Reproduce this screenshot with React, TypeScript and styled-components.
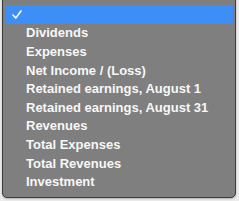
import React from "react";
import styled, { createGlobalStyle } from "styled-components";

const GlobalStyle = createGlobalStyle`
  html, body {
    margin: 0;
    padding: 0;
    background: #ececec;
  }
`;

const options = [
  "",
  "Dividends",
  "Expenses",
  "Net Income / (Loss)",
  "Retained earnings, August 1",
  "Retained earnings, August 31",
  "Revenues",
  "Total Expenses",
  "Total Revenues",
  "Investment",
];

const CheckIcon = () => (
  <svg width="10" height="9" viewBox="0 0 10 9">
    <path
      d="M1 5 L3.8 8 L9 1"
      fill="none"
      stroke="#ffffff"
      strokeWidth="1.6"
      strokeLinecap="round"
      strokeLinejoin="round"
    />
  </svg>
);

const App = () => {
  const [selected, setSelected] = React.useState(0);

  return (
    <>
      <GlobalStyle />
      <Page>
        <Menu>
          {options.map((label, i) => (
            <Item key={i} active={i === 0} onClick={() => setSelected(i)}>
              <Check>{i === selected && <CheckIcon />}</Check>
              <Label>{label}</Label>
            </Item>
          ))}
        </Menu>
      </Page>
    </>
  );
};

export default App;

const Page = styled.div`
  width: 239px;
  height: 201px;
  padding: 0 3px 3px 2px;
  box-sizing: border-box;
  display: flex;
  overflow: hidden;
`;

const Menu = styled.div`
  flex: 1;
  margin-top: -2px;
  background-color: #7f7f7f;
  border: 1px solid #3c3c3c;
  border-radius: 0 0 5px 5px;
  padding: 6px 2px 6px 2px;
  display: flex;
  flex-direction: column;
  box-shadow: 0 1px 2px rgba(0, 0, 0, 0.25);
  font-family: "Liberation Sans", Arial, sans-serif;
`;

const Item = styled.div<{ active?: boolean }>`
  display: flex;
  align-items: center;
  height: 18.7px;
  background-color: ${(p) => (p.active ? "#3d8ef7" : "transparent")};
  color: #f7f7f7;
  font-size: 13px;
  font-weight: 600;
  cursor: default;
`;

const Check = styled.span`
  width: 21px;
  padding-left: 7px;
  box-sizing: border-box;
  display: flex;
  align-items: center;
`;

const Label = styled.span`
  white-space: nowrap;
`;
